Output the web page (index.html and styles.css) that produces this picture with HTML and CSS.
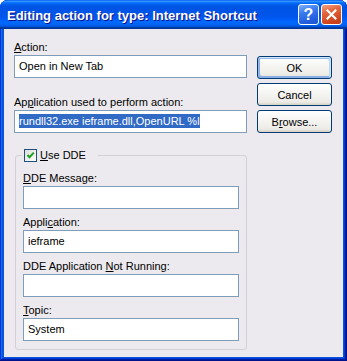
FILE: index.html
```html
<!DOCTYPE html>
<html lang="en">
<head>
    <meta charset="UTF-8">
    <meta name="viewport" content="width=device-width, initial-scale=1.0">
    <title>Editing action for type: Internet Shortcut</title>
    <link rel="stylesheet" href="styles.css">
</head>
<body>
    <div class="window">
        <div class="titlebar">
            <span class="title">Editing action for type: Internet Shortcut</span>
            <div class="title-buttons">
                <button class="tb help">?</button>
                <button class="tb close">
                    <svg width="11" height="11" viewBox="0 0 11 11">
                        <path d="M1.5 1.5 L9.5 9.5 M9.5 1.5 L1.5 9.5" stroke="#fff" stroke-width="2.2" stroke-linecap="square"/>
                    </svg>
                </button>
            </div>
        </div>
        <div class="client">
            <div class="main">
                <label class="lbl"><u>A</u>ction:</label>
                <div class="field">Open in New Tab</div>
                <label class="lbl spaced">Ap<u>p</u>lication used to perform action:</label>
                <div class="field"><span class="sel">rundll32.exe ieframe.dll,OpenURL %l</span></div>

                <fieldset class="group">
                    <legend>
                        <span class="check">
                            <svg width="11" height="11" viewBox="0 0 11 11">
                                <path d="M2.5 5 L4.5 7.2 L8.8 2.6" fill="none" stroke="#21a121" stroke-width="2"/>
                            </svg>
                        </span>
                        <u>U</u>se DDE
                    </legend>
                    <label class="lbl"><u>D</u>DE Message:</label>
                    <div class="field"></div>
                    <label class="lbl">Appli<u>c</u>ation:</label>
                    <div class="field">ieframe</div>
                    <label class="lbl">DDE Application <u>N</u>ot Running:</label>
                    <div class="field"></div>
                    <label class="lbl"><u>T</u>opic:</label>
                    <div class="field">System</div>
                </fieldset>
            </div>
            <div class="buttons">
                <button class="btn default">OK</button>
                <button class="btn">Cancel</button>
                <button class="btn">B<u>r</u>owse...</button>
            </div>
        </div>
    </div>
</body>
</html>
```

FILE: styles.css
```css
body {
    margin: 0;
    background: #fff;
    font-family: "Liberation Sans", Arial, sans-serif;
    font-size: 11px;
    color: #000;
}
.window {
    width: 347px;
    height: 361px;
    box-sizing: border-box;
    display: flex;
    flex-direction: column;
    padding-bottom: 4px;
    background: #0855dd;
    border-radius: 8px 8px 0 0;
    box-shadow: inset -1px -1px #00138c, inset 1px 1px #0831d9, inset -2px -2px #001ea0,
        inset 2px 2px #166aee, inset -3px -3px #003bda, inset 3px 3px #0855dd;
}
.titlebar {
    height: 29px;
    flex: none;
    display: flex;
    align-items: center;
    justify-content: space-between;
    padding: 0 5px 0 7px;
    border-radius: 8px 8px 0 0;
    background: linear-gradient(180deg, #0058ee 0%, #3593ff 4%, #288eff 6%, #127dff 8%, #036ffc 10%,
        #0262ee 14%, #0057e5 20%, #0054e3 24%, #0055eb 56%, #005bf5 66%, #026afe 76%,
        #0062ef 86%, #0052d6 92%, #0040ab 94%, #003092 100%);
}
.title {
    color: #fff;
    font-weight: bold;
    font-size: 13px;
    text-shadow: 1px 1px #0f1089;
    padding-top: 1px;
}
.title-buttons {
    display: flex;
    gap: 2px;
}
.tb {
    width: 21px;
    height: 21px;
    padding: 0;
    border: 1px solid #fff;
    border-radius: 3px;
    display: flex;
    align-items: center;
    justify-content: center;
    color: #fff;
    font-family: "Liberation Sans", Arial, sans-serif;
}
.help {
    background: linear-gradient(160deg, #7fb0fb 0%, #3b7cf0 35%, #2461e0 70%, #1c54d0 100%);
    font-size: 16px;
    font-weight: bold;
}
.close {
    background: linear-gradient(160deg, #f3a285 0%, #e3653d 35%, #d2461e 75%, #c23a17 100%);
}
.client {
    flex: 1;
    margin: 0 4px;
    display: flex;
    gap: 10px;
    padding: 12px 11px 7px 10px;
    background: #eceaee;
}
.main {
    width: 233px;
    display: flex;
    flex-direction: column;
}
.lbl {
    display: block;
    height: 13px;
    line-height: 13px;
    white-space: nowrap;
}
.lbl.spaced {
    margin-top: 18px;
}
.field {
    height: 23px;
    box-sizing: border-box;
    margin-top: 1px;
    padding: 0 4px;
    border: 1px solid #7f9db9;
    background: #fff;
    line-height: 21px;
    white-space: nowrap;
    overflow: hidden;
}
.sel {
    background: #316ac5;
    color: #fff;
    padding: 1px 0;
}
.group {
    margin: 16px 0 0 1px;
    padding: 10px 7px 8px;
    border: 1px solid #d3d1d6;
    border-radius: 3px;
    min-width: 0;
}
.group .field {
    margin-bottom: 7px;
}
.group .field:last-child {
    margin-bottom: 0;
}
.group legend {
    display: flex;
    align-items: center;
    height: 13px;
    line-height: 13px;
    margin-left: -1px;
    padding: 0 12px 0 2px;
}
.check {
    width: 13px;
    height: 13px;
    box-sizing: border-box;
    margin-right: 3px;
    border: 1px solid #1c5180;
    background: linear-gradient(135deg, #dcdcd7, #fff);
    display: flex;
}
.buttons {
    width: 75px;
    display: flex;
    flex-direction: column;
    gap: 4px;
    padding-top: 15px;
}
.btn {
    height: 23px;
    padding: 0;
    border: 1px solid #003c74;
    border-radius: 3px;
    background: linear-gradient(180deg, #fff, #ecebe6 86%, #d6d0c5);
    font-family: "Liberation Sans", Arial, sans-serif;
    font-size: 11px;
    color: #000;
}
.btn.default {
    box-shadow: inset -1px 1px #cee7ff, inset 1px 2px #98b8ea, inset -2px 2px #bcd4f6,
        inset 1px -1px #89ade4, inset 2px -2px #89ade4;
}
```
